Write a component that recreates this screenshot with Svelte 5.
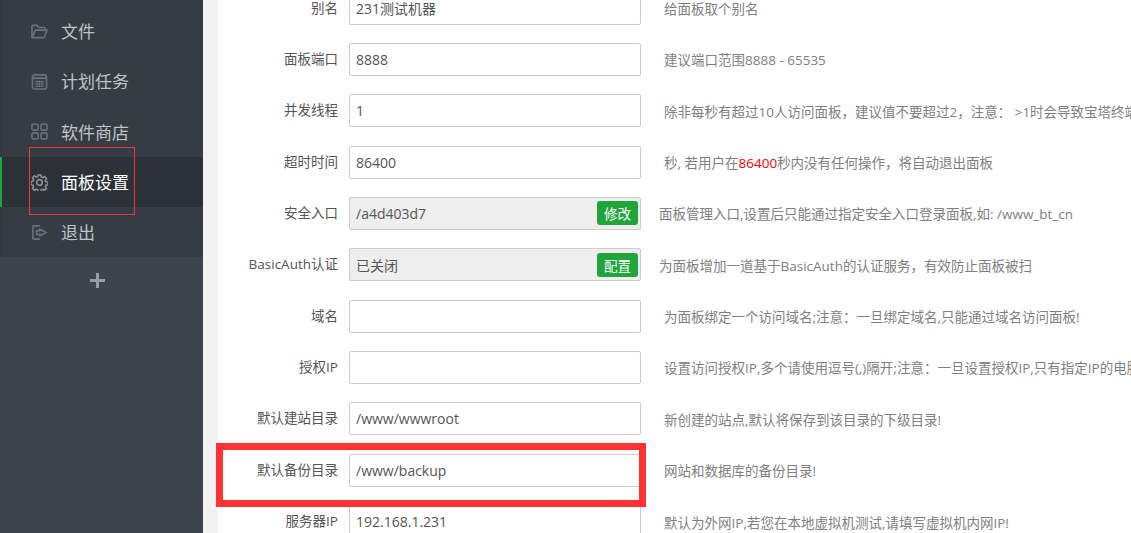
<script>
	const navItems = [
		{ name: '文件', icon: 'folder' },
		{ name: '计划任务', icon: 'calendar' },
		{ name: '软件商店', icon: 'grid' },
		{ name: '面板设置', icon: 'gear', active: true },
		{ name: '退出', icon: 'exit' }
	];

	const rows = [
		{ label: '别名', value: '231测试机器', note: '给面板取个别名' },
		{ label: '面板端口', value: '8888', note: '建议端口范围8888 - 65535' },
		{
			label: '并发线程',
			value: '1',
			note: '除非每秒有超过10人访问面板，建议值不要超过2，注意： >1时会导致宝塔终端等功能异常'
		},
		{ label: '超时时间', value: '86400', timeout: true },
		{
			label: '安全入口',
			value: '/a4d403d7',
			action: '修改',
			note: '面板管理入口,设置后只能通过指定安全入口登录面板,如: /www_bt_cn'
		},
		{
			label: 'BasicAuth认证',
			value: '已关闭',
			action: '配置',
			note: '为面板增加一道基于BasicAuth的认证服务，有效防止面板被扫'
		},
		{ label: '域名', value: '', note: '为面板绑定一个访问域名;注意：一旦绑定域名,只能通过域名访问面板!' },
		{
			label: '授权IP',
			value: '',
			note: '设置访问授权IP,多个请使用逗号(,)隔开;注意：一旦设置授权IP,只有指定IP的电脑能访问面板!'
		},
		{ label: '默认建站目录', value: '/www/wwwroot', note: '新创建的站点,默认将保存到该目录的下级目录!' },
		{ label: '默认备份目录', value: '/www/backup', note: '网站和数据库的备份目录!' },
		{
			label: '服务器IP',
			value: '192.168.1.231',
			note: '默认为外网IP,若您在本地虚拟机测试,请填写虚拟机内网IP!'
		}
	];
</script>

<div class="page">
	<aside class="sidebar">
		<ul class="nav">
			{#each navItems as item}
				<li class:active={item.active}>
					<svg class="icon" viewBox="0 0 18 18" fill="none" stroke="currentColor" stroke-width="1.7">
						{#if item.icon === 'folder'}
							<path d="M1 15V3.500q0-1 1-1h4.500l2 2.200H14q1 0 1 1V7" />
							<path d="M1.200 15.500H14L17 7.500H4.500z" />
						{:else if item.icon === 'calendar'}
							<rect x="1.500" y="2" width="15" height="15" rx="2.500" />
							<path d="M1.500 5.500h15" stroke-width="2" />
							<path d="M4.500 0.500v2M13.500 0.500v2M4 9h10M4 11.500h10M4 14h10M6.500 8v7M9 8v7M11.500 8v7" stroke-width="1" />
						{:else if item.icon === 'grid'}
							<rect x="1" y="1" width="6.500" height="6.500" rx="1.800" />
							<rect x="10.500" y="1" width="6.500" height="6.500" rx="1.800" />
							<rect x="1" y="10.500" width="6.500" height="6.500" rx="1.800" />
							<rect x="10.500" y="10.500" width="6.500" height="6.500" rx="1.800" />
						{:else if item.icon === 'gear'}
							<circle cx="9" cy="9" r="3" />
							<path d="M7.500 1h3l.4 2.200 1.500.7 1.900-1.200 2.100 2.100-1.200 1.900.6 1.500 2.200.4v2.800l-2.200.5-.6 1.500 1.200 1.800-2.100 2.100-1.900-1.200-1.500.7-.4 2.100h-3l-.4-2.100-1.500-.7-1.900 1.200-2.100-2.100 1.200-1.800-.6-1.500-2.200-.5V7.900l2.200-.4.600-1.500-1.200-1.900 2.100-2.100 1.900 1.200 1.500-.7z" />
						{:else}
							<path d="M9.500 2H3q-1 0-1 1v12q0 1 1 1h6.500" />
							<path d="M9.500 5.500V7H6v4h3.500v1.500L16 9z" />
						{/if}
					</svg>
					<span>{item.name}</span>
				</li>
			{/each}
		</ul>
		<div class="add">
			<svg viewBox="0 0 15 15" width="15" height="15"><path d="M6 0h3v6h6v3H9v6H6V9H0V6h6z" fill="currentColor" /></svg>
		</div>
	</aside>

	<main class="panel">
		<div class="form">
			{#each rows as row}
				<div class="row">
					<span class="label">{row.label}</span>
					<div class="field" class:locked={row.action}>
						<span>{row.value}</span>
						{#if row.action}
							<button type="button">{row.action}</button>
						{/if}
					</div>
					<p class="note" class:tight={row.action}>
						{#if row.timeout}
							秒, 若用户在<em>86400</em>秒内没有任何操作，将自动退出面板
						{:else}
							{row.note}
						{/if}
					</p>
				</div>
			{/each}
		</div>
	</main>

	<div class="mark mark-nav"></div>
	<div class="mark mark-row"></div>
</div>

<style>
	:global(body) {
		margin: 0;
	}

	.page {
		position: relative;
		display: flex;
		width: 1131px;
		height: 533px;
		overflow: hidden;
		background: #f2f2f2;
		font-family: "Open Sans", "Noto Sans CJK SC", sans-serif;
	}

	/* Sidebar */
	.sidebar {
		flex: 0 0 203px;
		background: #3c444d;
	}

	.nav {
		margin: 0;
		padding: 6px 0 0;
		list-style: none;
		background: #363c44;
		border-left: 2px solid #33383e;
	}

	.nav li {
		display: flex;
		align-items: center;
		height: 50.3px;
		margin-left: -2px;
		padding-left: 31px;
		box-sizing: border-box;
		color: #bfc4c9;
		font-size: 17px;
	}

	.nav li span {
		margin-top: -1px;
	}

	.nav li.active {
		background: #2c3138;
		border-left: 2px solid #20a53a;
		padding-left: 29px;
		color: #fff;
	}

	.icon {
		width: 17px;
		height: 17px;
		margin-right: 13px;
		color: #6b7075;
	}

	.active .icon {
		color: #8c9095;
	}

	.add {
		display: flex;
		justify-content: center;
		padding: 16px 9px 0 0;
		color: #9a9ea2;
	}

	/* Settings form */
	.panel {
		flex: 1;
		margin-left: 15px;
		background: #fff;
		overflow: hidden;
	}

	.form {
		margin-top: -17.6px;
	}

	.row {
		display: flex;
		align-items: center;
		height: 51.35px;
		font-size: 13.5px;
		white-space: nowrap;
	}

	.label {
		flex: 0 0 120px;
		margin-bottom: 3px;
		text-align: right;
		color: #555;
	}

	.field {
		display: flex;
		align-items: center;
		justify-content: space-between;
		flex: 0 0 292px;
		box-sizing: border-box;
		height: 33px;
		margin-left: 11px;
		padding: 0 2px 0 6px;
		border: 1px solid #ccc;
		border-radius: 2px;
		background: #fff;
		color: #555;
		font-size: 14px;
	}

	.field.locked {
		background: #eee;
	}

	.field button {
		height: 24px;
		padding: 0 7px;
		border: 0;
		border-radius: 3px;
		background: #20a53a;
		color: #fff;
		font: inherit;
		font-size: 13.5px;
	}

	.note {
		margin: 0 0 0 23px;
		color: #808080;
	}

	.note.tight {
		margin-left: 18px;
	}

	.note em {
		color: #f00;
		font-style: normal;
	}

	/* Red annotation boxes */
	.mark {
		position: absolute;
		box-sizing: border-box;
		pointer-events: none;
	}

	.mark-nav {
		left: 29px;
		top: 147px;
		width: 106px;
		height: 68px;
		border: 1px solid #f33;
	}

	.mark-row {
		left: 216px;
		top: 443px;
		width: 430px;
		height: 64px;
		border: 7px solid #f33;
	}
</style>
